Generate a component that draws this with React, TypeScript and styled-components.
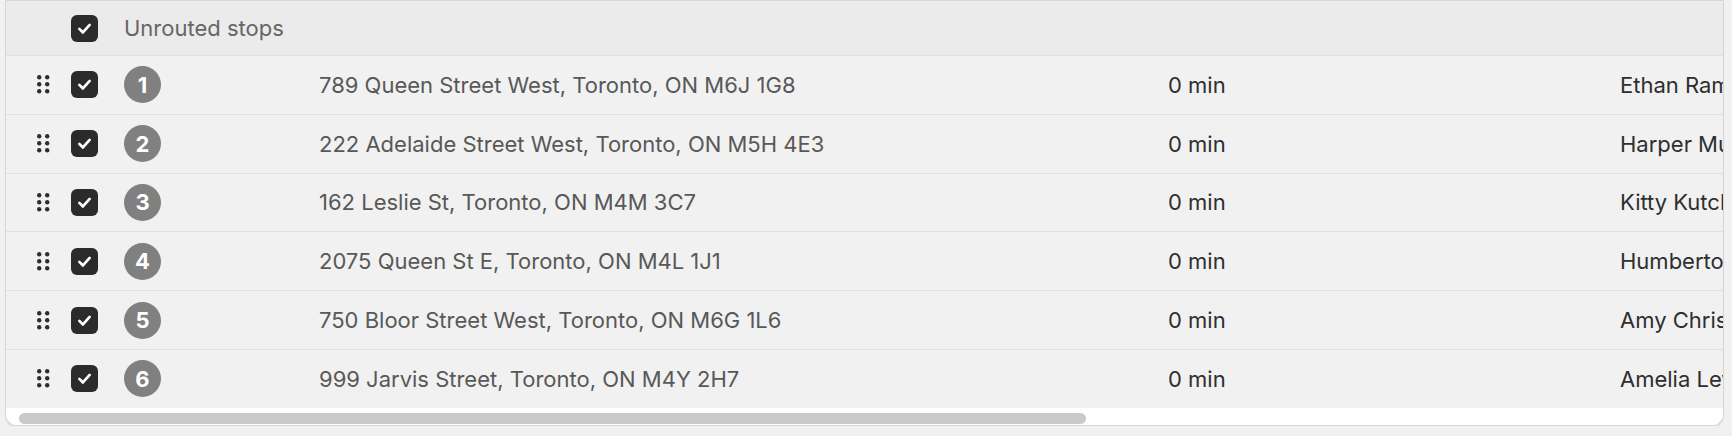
import React from 'react';
import styled, {createGlobalStyle} from 'styled-components';

const stops = [
	{address: '789 Queen Street West, Toronto, ON M6J 1G8', time: '0 min', name: 'Ethan Ramirez'},
	{address: '222 Adelaide Street West, Toronto, ON M5H 4E3', time: '0 min', name: 'Harper Murphy'},
	{address: '162 Leslie St, Toronto, ON M4M 3C7', time: '0 min', name: 'Kitty Kutcher'},
	{address: '2075 Queen St E, Toronto, ON M4L 1J1', time: '0 min', name: 'Humberto Silva'},
	{address: '750 Bloor Street West, Toronto, ON M6G 1L6', time: '0 min', name: 'Amy Christensen'},
	{address: '999 Jarvis Street, Toronto, ON M4Y 2H7', time: '0 min', name: 'Amelia Lewis'}
];

const GlobalStyle = createGlobalStyle`
	body {
		margin: 0;
		background: #f1f1f1;
		font-family: Inter, 'Noto Sans', sans-serif;
	}
`;

function CheckBox() {
	return (
		<Box>
			<svg width="19" height="19" viewBox="0 0 24 24" fill="none">
				<path
					d="M5.5 12.5l4.5 4.5L18.5 7.5"
					stroke="#fff"
					strokeWidth="3.4"
					strokeLinecap="round"
					strokeLinejoin="round"
				/>
			</svg>
		</Box>
	);
}

function DragHandle() {
	const dots = [];
	for (let r = 0; r < 3; r++) {
		for (let c = 0; c < 2; c++) {
			dots.push(<circle key={`${r}-${c}`} cx={2.2 + c * 8} cy={2.2 + r * 7} r={2.2} fill="#2e2e2e" />);
		}
	}
	return (
		<svg width="13" height="19" viewBox="0 0 13 19">
			{dots}
		</svg>
	);
}

export default function App() {
	return (
		<>
			<GlobalStyle />
			<Card>
				<Table>
					<HeaderRow>
						<Cell />
						<Cell>
							<CheckBox />
						</Cell>
						<HeaderTitle>Unrouted stops</HeaderTitle>
					</HeaderRow>
					{stops.map((stop, i) => (
						<Row key={i} last={i === stops.length - 1}>
							<HandleCell>
								<DragHandle />
							</HandleCell>
							<Cell>
								<CheckBox />
							</Cell>
							<Cell>
								<Badge>{i + 1}</Badge>
							</Cell>
							<Address>{stop.address}</Address>
							<Text>{stop.time}</Text>
							<Text>{stop.name}</Text>
						</Row>
					))}
				</Table>
				<ScrollTrack>
					<ScrollThumb />
				</ScrollTrack>
			</Card>
		</>
	);
}

const Card = styled.div`
	margin: 0 8px 0 5px;
	border: 1px solid #d6d6d6;
	border-radius: 0 0 12px 12px;
	background: #fff;
	overflow: hidden;
	box-shadow: 0 2px 1px rgba(0, 0, 0, 0.08);
`;

const Table = styled.div`
	display: flex;
	flex-direction: column;
	width: 1914px;
`;

const columns = '65px 53px 195px 849px 452px 300px';

const HeaderRow = styled.div`
	display: grid;
	grid-template-columns: ${columns};
	align-items: center;
	height: 54px;
	background: #ebebeb;
	border-bottom: 1px solid #e0e0e0;
`;

const Row = styled.div<{last?: boolean}>`
	display: grid;
	grid-template-columns: ${columns};
	align-items: center;
	height: 57.8px;
	background: #f1f1f1;
	border-bottom: ${(p) => (p.last ? 'none' : '1px solid #e0e0e0')};
`;

const Cell = styled.div`
	display: flex;
	align-items: center;
`;

const HandleCell = styled(Cell)`
	padding-left: 31px;
`;

const HeaderTitle = styled.div`
	grid-column: 3 / span 2;
	font-size: 22px;
	color: #666;
`;

const Box = styled.div`
	width: 27px;
	height: 27px;
	border-radius: 6px;
	background: #2b2b2b;
	display: flex;
	align-items: center;
	justify-content: center;
`;

const Badge = styled.div`
	width: 37px;
	height: 37px;
	border-radius: 50%;
	background: #808080;
	color: #fff;
	font-weight: 700;
	font-size: 22px;
	display: flex;
	align-items: center;
	justify-content: center;
`;

const Text = styled.div`
	font-size: 22px;
	color: #2e2e2e;
	white-space: nowrap;
`;

const Address = styled(Text)`
	color: #585858;
`;

const ScrollTrack = styled.div`
	height: 17px;
	padding: 5px 0 1px 13px;
	box-sizing: border-box;
	background: #fff;
`;

const ScrollThumb = styled.div`
	width: 1067px;
	height: 11px;
	border-radius: 6px;
	background: #cacaca;
`;
